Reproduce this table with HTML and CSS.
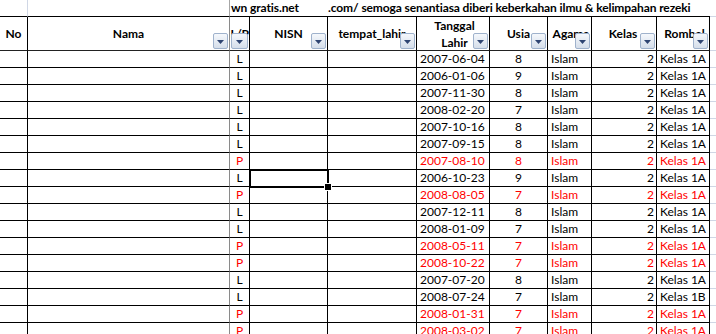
FILE: index.html
```html
<!DOCTYPE html>
<html lang="id">
<head>
<meta charset="utf-8">
<title>Data Siswa</title>
<link rel="stylesheet" href="styles.css">
</head>
<body>
<div class="sheet">
  <div class="row top">
    <div class="c c-no"></div>
    <div class="c c-nama"></div>
    <div class="c c-jk"><span class="banner b1">wn gratis.net</span></div>
    <div class="c c-nisn"></div>
    <div class="c c-tmp"><span class="banner b2">.com/ semoga senantiasa diberi keberkahan ilmu &amp; kelimpahan rezeki</span></div>
    <div class="c c-tgl"></div>
    <div class="c c-usia"></div>
    <div class="c c-agama"></div>
    <div class="c c-kelas"></div>
    <div class="c c-rombel"></div>
    <div class="c c-rest"></div>
  </div>
  <div class="row head">
    <div class="c c-no"><span class="h">No</span></div>
    <div class="c c-nama"><span class="h">Nama</span><span class="dd"><svg viewBox="0 0 7 4" width="7" height="4"><polygon points="0,0 7,0 3.5,4"/></svg></span></div>
    <div class="c c-jk"><span class="h">L/P</span><span class="dd"><svg viewBox="0 0 7 4" width="7" height="4"><polygon points="0,0 7,0 3.5,4"/></svg></span></div>
    <div class="c c-nisn"><span class="h">NISN</span><span class="dd"><svg viewBox="0 0 7 4" width="7" height="4"><polygon points="0,0 7,0 3.5,4"/></svg></span></div>
    <div class="c c-tmp"><span class="h">tempat_lahir</span><span class="dd"><svg viewBox="0 0 7 4" width="7" height="4"><polygon points="0,0 7,0 3.5,4"/></svg></span></div>
    <div class="c c-tgl"><span class="h">Tanggal<br>Lahir</span><span class="dd"><svg viewBox="0 0 7 4" width="7" height="4"><polygon points="0,0 7,0 3.5,4"/></svg></span></div>
    <div class="c c-usia"><span class="h">Usia</span><span class="dd"><svg viewBox="0 0 7 4" width="7" height="4"><polygon points="0,0 7,0 3.5,4"/></svg></span></div>
    <div class="c c-agama"><span class="h">Agama</span><span class="dd"><svg viewBox="0 0 7 4" width="7" height="4"><polygon points="0,0 7,0 3.5,4"/></svg></span></div>
    <div class="c c-kelas"><span class="h">Kelas</span><span class="dd"><svg viewBox="0 0 7 4" width="7" height="4"><polygon points="0,0 7,0 3.5,4"/></svg></span></div>
    <div class="c c-rombel"><span class="h">Rombel</span><span class="dd"><svg viewBox="0 0 7 4" width="7" height="4"><polygon points="0,0 7,0 3.5,4"/></svg></span></div>
    <div class="c c-rest"></div>
  </div>
  <div id="rows"></div>
</div>
<script src="script.js"></script>
</body>
</html>
```
FILE: styles.css
```css
* { box-sizing: border-box; }
html, body { margin: 0; padding: 0; background: #fff; }
body {
  font-family: Lato, "Liberation Sans", sans-serif;
  font-size: 12px;
  color: #000;
  width: 716px;
  height: 334px;
  overflow: hidden;
}
.sheet { width: 716px; }
.row {
  display: grid;
  grid-template-columns: 28px 202px 20px 78px 89px 73px 58px 44px 65px 53px 1fr;
  height: 17px;
}
.c {
  border-right: 1px solid #000;
  border-bottom: 1px solid #000;
  display: flex;
  align-items: center;
  white-space: nowrap;
  overflow: hidden;
  position: relative;
  line-height: 14px;
}
.c-nama { border-right-color: #8a8a8a; }
.c-rest { border-right: none; border-bottom-color: #d0d7e5; }

/* top banner row */
.row.top { height: 17px; }
.row.top .c { border-right: none; overflow: visible; }
.row.top .c-no { border-right: 1px solid #d0d7e5; }
.row.top .c-nama { border-right: 1px solid #a6a6a6; }
.row.top .c-jk { justify-content: flex-start; }
.banner {
  font-weight: bold;
  font-size: 12px;
  letter-spacing: -0.1px;
  position: relative;
  z-index: 2;
}
.b1 { margin-left: 1px; }

/* header */
.row.head { height: 34px; }
.row.head .c { justify-content: center; border-bottom-color: #222; }
.row.head .c-rest { border-bottom-color: #d0d7e5; }
.h {
  font-weight: bold;
  text-align: center;
  line-height: 16px;
}
.head .c-tgl .h { line-height: 17px; }
.dd {
  position: absolute;
  right: 1px;
  bottom: 1px;
  width: 15px;
  height: 16px;
  border: 1px solid #9fb2cc;
  border-radius: 2px;
  background: linear-gradient(#f5f8fc, #d5deea);
  display: flex;
  align-items: center;
  justify-content: center;
  padding-top: 2px;
}
.head .c-jk .dd { width: 17px; right: 1px; }
.head .c-jk .h { letter-spacing: -0.5px; }
.dd svg { fill: #2f4572; display: block; }

/* data */
.c-jk, .c-usia { justify-content: center; }
.c-tgl, .c-agama, .c-rombel { padding-left: 3px; }
.c-kelas { justify-content: flex-end; padding-right: 2px; }
.red .c-tgl, .red .c-usia, .red .c-agama, .red .c-kelas, .red .c-rombel, .red .c-jk { color: #f00; }

.sel { overflow: visible; }
.sel::before {
  content: "";
  position: absolute;
  left: -1px; top: -1px; right: -2px; bottom: -2px;
  border: 2px solid #000;
  z-index: 3;
}
.sel::after {
  content: "";
  position: absolute;
  right: -5px; bottom: -5px;
  width: 6px; height: 6px;
  background: #000;
  border: 1px solid #fff;
  z-index: 4;
}
```
FILE: script.js
```js
const data = [
  ["L","2007-06-04","8","Kelas 1A"],
  ["L","2006-01-06","9","Kelas 1A"],
  ["L","2007-11-30","8","Kelas 1A"],
  ["L","2008-02-20","7","Kelas 1A"],
  ["L","2007-10-16","8","Kelas 1A"],
  ["L","2007-09-15","8","Kelas 1A"],
  ["P","2007-08-10","8","Kelas 1A"],
  ["L","2006-10-23","9","Kelas 1A"],
  ["P","2008-08-05","7","Kelas 1A"],
  ["L","2007-12-11","8","Kelas 1A"],
  ["L","2008-01-09","7","Kelas 1A"],
  ["P","2008-05-11","7","Kelas 1A"],
  ["P","2008-10-22","7","Kelas 1A"],
  ["L","2007-07-20","8","Kelas 1A"],
  ["L","2008-07-24","7","Kelas 1B"],
  ["P","2008-01-31","7","Kelas 1A"],
  ["P","2008-03-02","7","Kelas 1A"]
];
const host = document.getElementById("rows");
data.forEach((r, i) => {
  const row = document.createElement("div");
  row.className = "row" + (r[0] === "P" ? " red" : "");
  row.innerHTML =
    '<div class="c c-no"></div>' +
    '<div class="c c-nama"></div>' +
    '<div class="c c-jk">' + r[0] + '</div>' +
    '<div class="c c-nisn' + (i === 7 ? ' sel' : '') + '"></div>' +
    '<div class="c c-tmp"></div>' +
    '<div class="c c-tgl">' + r[1] + '</div>' +
    '<div class="c c-usia">' + r[2] + '</div>' +
    '<div class="c c-agama">Islam</div>' +
    '<div class="c c-kelas">2</div>' +
    '<div class="c c-rombel">' + r[3] + '</div>' +
    '<div class="c c-rest"></div>';
  host.appendChild(row);
});
```
